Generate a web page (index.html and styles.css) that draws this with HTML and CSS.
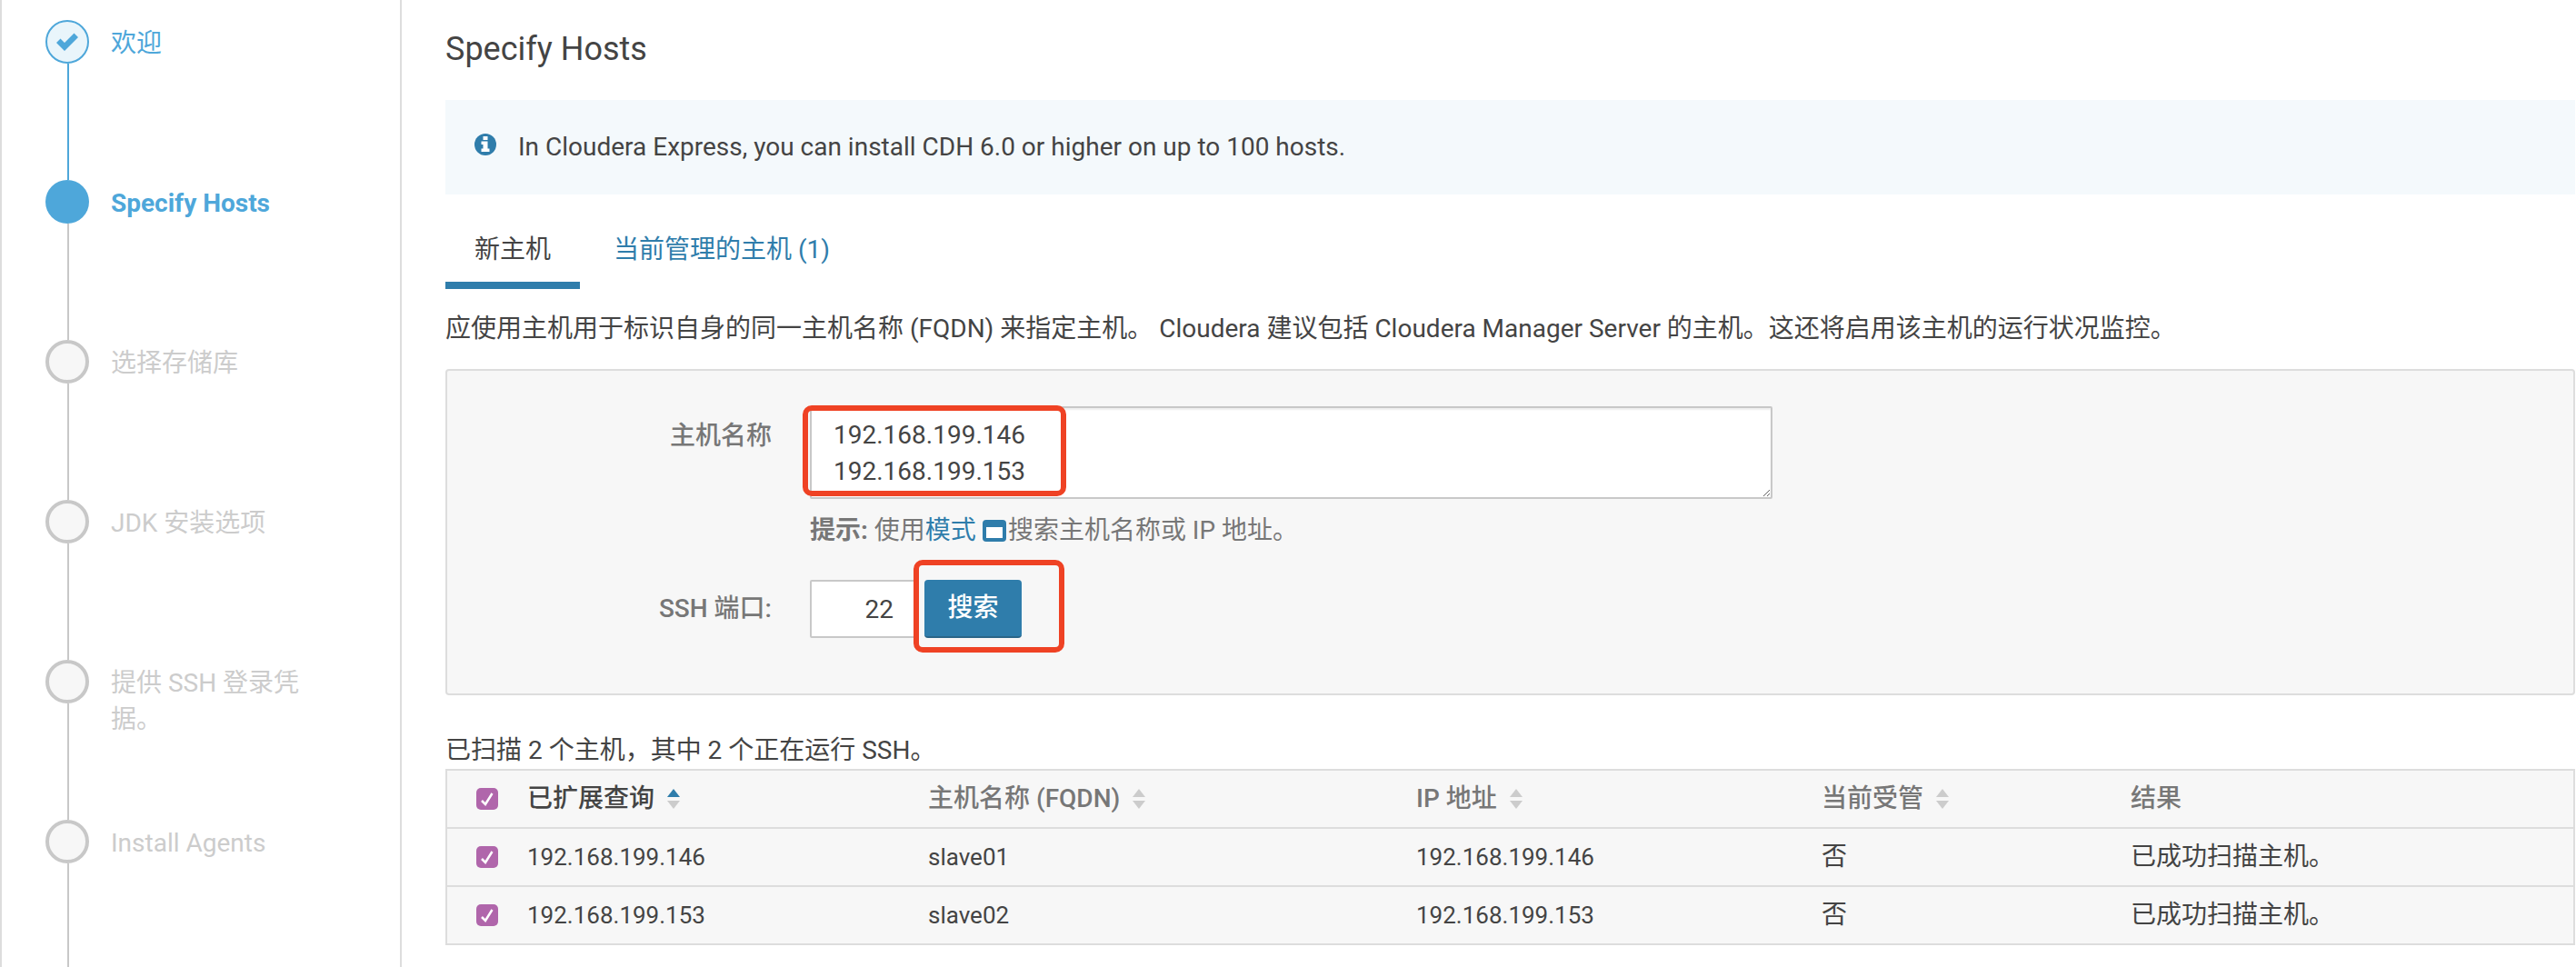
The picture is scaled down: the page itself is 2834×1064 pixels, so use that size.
FILE: index.html
```html
<!DOCTYPE html>
<html lang="zh">
  <head>
    <meta charset="UTF-8">
    <title>Specify Hosts</title>
    <link rel="stylesheet" href="styles.css">
  </head>
  <body>

    <nav class="steps">
      <div class="step done">
        <div class="marker">
          <span class="dot">
            <svg viewBox="0 0 24 20" width="24" height="20"><path d="M0 11 L4.5 6.5 L9 11 L19.5 0.5 L24 5 L9 20 Z" fill="#4ea7da"/></svg>
          </span>
          <span class="line"></span>
        </div>
        <span class="step-name">欢迎</span>
      </div>
      <div class="step active">
        <div class="marker"><span class="dot"></span><span class="line"></span></div>
        <span class="step-name">Specify Hosts</span>
      </div>
      <div class="step">
        <div class="marker"><span class="dot"></span><span class="line"></span></div>
        <span class="step-name">选择存储库</span>
      </div>
      <div class="step">
        <div class="marker"><span class="dot"></span><span class="line"></span></div>
        <span class="step-name">JDK 安装选项</span>
      </div>
      <div class="step">
        <div class="marker"><span class="dot"></span><span class="line"></span></div>
        <span class="step-name">提供 SSH 登录凭据。</span>
      </div>
      <div class="step last">
        <div class="marker"><span class="dot"></span><span class="line"></span></div>
        <span class="step-name">Install Agents</span>
      </div>
    </nav>

    <main class="content">
      <h1 class="title">Specify Hosts</h1>

      <div class="alert">
        <svg class="alert-icon" viewBox="0 0 24 24" width="24" height="24">
          <circle cx="12" cy="12" r="12" fill="#2f7dab"/>
          <path d="M9.5 3 H14.5 V7 H9.5 Z M7.5 8.5 H14.5 V16.5 H16.5 V20 H7.5 V16.5 H9.5 V12 H7.5 Z" fill="#fff"/>
        </svg>
        <span>In Cloudera Express, you can install CDH 6.0 or higher on up to 100 hosts.</span>
      </div>

      <ul class="tabs">
        <li class="tab current">新主机</li>
        <li class="tab"><a href="#">当前管理的主机 (1)</a></li>
      </ul>

      <p class="desc">应使用主机用于标识自身的同一主机名称 (FQDN) 来指定主机。 Cloudera 建议包括 Cloudera Manager Server 的主机。这还将启用该主机的运行状况监控。</p>

      <form class="panel">
        <label class="field-label" for="hosts">主机名称</label>
        <div class="field">
          <textarea id="hosts" class="hosts" spellcheck="false">192.168.199.146
192.168.199.153</textarea>
          <p class="hint">
            <b>提示:</b> 使用<a href="#">模式</a>
            <svg class="hint-icon" viewBox="0 0 26 24" width="26" height="24"><rect width="26" height="24" rx="4" fill="#2f7dab"/><rect x="4" y="8" width="18" height="12" fill="#fff"/></svg><span>搜索主机名称或 IP 地址。</span>
          </p>
        </div>

        <label class="field-label port-label" for="port">SSH 端口:</label>
        <div class="field port-row">
          <input id="port" class="port" type="text" value="22">
          <button class="search" type="button">搜索</button>
        </div>

        <span class="mark mark-hosts"></span>
        <span class="mark mark-search"></span>
      </form>

      <p class="scanned">已扫描 2 个主机，其中 2 个正在运行 SSH。</p>

      <table class="results">
        <colgroup><col class="c-check"><col class="c-ip"><col class="c-name"><col class="c-addr"><col class="c-managed"><col></colgroup>
        <thead>
          <tr>
            <th><span class="check"><svg viewBox="0 0 24 24" width="24" height="24"><path d="M6 14 L10 18 L17.5 6" fill="none" stroke="#fff" stroke-width="2.5"/></svg></span></th>
            <th class="sorted">已扩展查询<span class="sort up"></span></th>
            <th>主机名称 (FQDN)<span class="sort"></span></th>
            <th>IP 地址<span class="sort"></span></th>
            <th>当前受管<span class="sort"></span></th>
            <th>结果</th>
          </tr>
        </thead>
        <tbody>
          <tr>
            <td><span class="check"><svg viewBox="0 0 24 24" width="24" height="24"><path d="M6 14 L10 18 L17.5 6" fill="none" stroke="#fff" stroke-width="2.5"/></svg></span></td>
            <td>192.168.199.146</td>
            <td>slave01</td>
            <td>192.168.199.146</td>
            <td>否</td>
            <td>已成功扫描主机。</td>
          </tr>
          <tr>
            <td><span class="check"><svg viewBox="0 0 24 24" width="24" height="24"><path d="M6 14 L10 18 L17.5 6" fill="none" stroke="#fff" stroke-width="2.5"/></svg></span></td>
            <td>192.168.199.153</td>
            <td>slave02</td>
            <td>192.168.199.153</td>
            <td>否</td>
            <td>已成功扫描主机。</td>
          </tr>
        </tbody>
      </table>
    </main>

  </body>
</html>
```

FILE: styles.css
```css
:root {
  --clr-text: #444;
  --clr-muted: #777;
  --clr-line: #ddd;
  --clr-panel: #f7f7f7;
  --clr-link: #2f7dab;
  --clr-step: #4ea7da;
  --clr-pending: #c8c8c8;
  --clr-mark: #ef4224;
}

html, body {
  margin: 0;
  padding: 0;
}

*, *::before, *::after {
  box-sizing: border-box;
}

body {
  display: flex;
  align-items: stretch;
  height: 1064px;
  overflow: hidden;
  color: var(--clr-text);
  background: #fff;
  font: normal 28px/40px Roboto, "Noto Sans CJK SC", sans-serif;
}

a {
  color: var(--clr-link);
  text-decoration: none;
}

p {
  margin: 0;
}


/* Wizard steps
 *
 */

.steps {
  flex: 0 0 442px;
  display: flex;
  flex-direction: column;
  padding: 22px 0 0 48px;
  border-left: 2px solid var(--clr-line);
  border-right: 2px solid var(--clr-line);
}

.step {
  display: flex;
  gap: 24px;
  height: 176px;
  color: #ccc;
}
.step.last {
  flex: 1;
}

.marker {
  flex: 0 0 48px;
  display: flex;
  flex-direction: column;
  align-items: center;
}

.dot {
  flex: 0 0 48px;
  width: 48px;
  display: flex;
  align-items: center;
  justify-content: center;
  border: 4px solid var(--clr-pending);
  border-radius: 50%;
  background: var(--clr-panel);
}

.line {
  flex: 1;
  width: 2px;
  margin-left: 2px;
  background: var(--clr-pending);
}

.step-name {
  width: 220px;
  padding-top: 6px;
}

.step.done, .step.active {
  color: var(--clr-step);
}
.step.done .dot {
  border: 2px solid var(--clr-step);
  background: #e9f5fb;
}
.step.done .line {
  background: var(--clr-step);
}
.step.active .dot {
  border: none;
  background: var(--clr-step);
}
.step.active .step-name {
  font-weight: 700;
}


/* Main column
 *
 */

.content {
  flex: 1;
  min-width: 0;
  padding: 34px 1px 0 48px;
}

.title {
  margin: 0 0 36px;
  font-size: 36px;
  font-weight: 400;
  line-height: 40px;
}

.alert {
  display: flex;
  align-items: center;
  gap: 24px;
  height: 104px;
  padding-left: 32px;
  background: #f4f9fc;
}
.alert-icon {
  margin-bottom: 6px;
}

.tabs {
  display: flex;
  gap: 5px;
  margin: 30px 0 0;
  padding: 0;
  list-style: none;
}

.tab {
  height: 74px;
  padding: 11px 32px 0;
  border-bottom: 8px solid transparent;
}
.tab.current {
  border-bottom-color: var(--clr-link);
}

.desc {
  margin: 24px 0;
}


/* Host form
 *
 */

.panel {
  position: relative;
  display: grid;
  grid-template-columns: 357px 1fr;
  column-gap: 42px;
  align-content: start;
  height: 359px;
  padding-top: 39px;
  border: 2px solid var(--clr-line);
  border-radius: 4px;
  background: var(--clr-panel);
}

.field-label {
  color: var(--clr-muted);
  font-weight: 500;
  text-align: right;
  padding-top: 13px;
}
.port-label {
  padding-top: 12px;
}

.hosts {
  display: block;
  width: 1059px;
  height: 102px;
  padding: 10px 24px;
  border: 2px solid var(--clr-pending);
  border-radius: 2px;
  box-shadow: inset 0 2px 2px rgba(0, 0, 0, .07);
  color: var(--clr-text);
  background: #fff;
  font: inherit;
}

.hint {
  display: flex;
  align-items: center;
  margin: 15px 0 34px;
  color: var(--clr-muted);
  white-space: pre-wrap;
}
.hint-icon {
  margin: 0 2px 0 7px;
}

.port-row {
  display: flex;
  gap: 10px;
}

.port {
  width: 116px;
  height: 64px;
  padding: 0 22px 0 0;
  border: 2px solid var(--clr-pending);
  border-radius: 2px;
  color: var(--clr-text);
  background: #fff;
  font: inherit;
  text-align: right;
}

.search {
  width: 107px;
  height: 64px;
  padding: 0;
  border: none;
  border-bottom: 2px solid #2a6588;
  border-radius: 4px;
  color: #fff;
  background: var(--clr-link);
  font: inherit;
  font-weight: 500;
}

/* hand-drawn red boxes on top of the form */
.mark {
  position: absolute;
  border: 6px solid var(--clr-mark);
  border-radius: 10px;
}
.mark-hosts {
  left: 391px;
  top: 38px;
  width: 290px;
  height: 100px;
}
.mark-search {
  left: 513px;
  top: 208px;
  width: 166px;
  height: 102px;
}


/* Scan results
 *
 */

.scanned {
  margin-top: 41px;
}

.results {
  width: 100%;
  table-layout: fixed;
  border-spacing: 0;
  border: solid var(--clr-line);
  border-width: 2px 2px 0;
  background: var(--clr-panel);
  font-size: 26px;
}

.results th, .results td {
  height: 64px;
  padding: 0;
  border-bottom: 2px solid var(--clr-line);
  text-align: left;
  white-space: nowrap;
}

.results th {
  color: var(--clr-muted);
  font-size: 28px;
  font-weight: 500;
}
.results th.sorted {
  color: var(--clr-text);
}
.results td:nth-child(5), .results td:nth-child(6) {
  font-size: 28px;
}

.c-check { width: 88px; }
.c-ip { width: 441px; }
.c-name { width: 537px; }
.c-addr { width: 446px; }
.c-managed { width: 340px; }

.check {
  display: block;
  width: 24px;
  height: 24px;
  margin-left: 32px;
  border-radius: 5px;
  background: #b066ab;
}
.check svg {
  display: block;
}

/* two little triangles after a sortable heading */
.sort {
  display: inline-block;
  position: relative;
  width: 14px;
  height: 22px;
  margin-left: 14px;
  vertical-align: -2px;
}
.sort::before, .sort::after {
  content: '';
  position: absolute;
  left: 0;
  border: solid transparent;
  border-width: 0 7px;
}
.sort::before {
  top: 0;
  border-bottom: 9px solid #ccc;
}
.sort::after {
  bottom: 0;
  border-top: 9px solid #ccc;
}
.sort.up::before {
  border-bottom-color: var(--clr-link);
}
```
